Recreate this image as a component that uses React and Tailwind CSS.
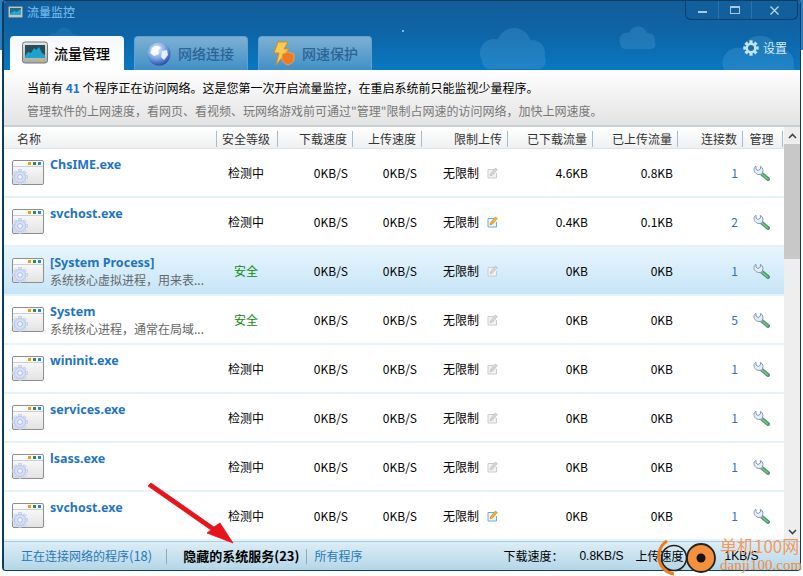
const CJK = '"Noto Sans CJK SC","Liberation Sans",sans-serif';

const rows = [
  { name: 'ChsIME.exe', level: '检测中', dl: '4.6KB', ul: '0.8KB', n: 1 },
  { name: 'svchost.exe', level: '检测中', dl: '0.4KB', ul: '0.1KB', n: 2, pen: true },
  { name: '[System Process]', sub: '系统核心虚拟进程，用来表...', level: '安全', dl: '0KB', ul: '0KB', n: 1, sel: true },
  { name: 'System', sub: '系统核心进程，通常在局域...', level: '安全', dl: '0KB', ul: '0KB', n: 5 },
  { name: 'wininit.exe', level: '检测中', dl: '0KB', ul: '0KB', n: 1 },
  { name: 'services.exe', level: '检测中', dl: '0KB', ul: '0KB', n: 1 },
  { name: 'lsass.exe', level: '检测中', dl: '0KB', ul: '0KB', n: 1 },
  { name: 'svchost.exe', level: '检测中', dl: '0KB', ul: '0KB', n: 1, pen: true },
];

function Cloud({ x, y, s = 1, o = 0.22 }) {
  return (
    <g transform={`translate(${x} ${y}) scale(${s})`} fill="#6db4e4" opacity={o}>
      <circle cx="20" cy="22" r="14" />
      <circle cx="40" cy="14" r="17" />
      <circle cx="58" cy="22" r="13" />
      <rect x="8" y="22" width="64" height="16" rx="8" />
    </g>
  );
}

function MonitorIcon() {
  return (
    <svg width="26" height="24" viewBox="0 0 26 24" className="shrink-0">
      <defs>
        <linearGradient id="mon" x1="0" y1="0" x2="0" y2="1">
          <stop offset="0" stopColor="#e8e8e6" />
          <stop offset="1" stopColor="#a9a9a4" />
        </linearGradient>
      </defs>
      <rect x="0.5" y="1" width="25" height="21" rx="2.5" fill="url(#mon)" stroke="#77777a" />
      <rect x="3" y="4" width="20" height="13" fill="#274c5c" />
      <path d="M3 15 L6 11 L9 12 L12 7 L14 9 L17 6 L20 12 L23 14 V17 H3 Z" fill="#1fa3cc" />
      <rect x="17" y="18.5" width="3" height="2" fill="#f0b020" />
    </svg>
  );
}

function GlobeIcon() {
  return (
    <svg width="24" height="24" viewBox="0 0 24 24" className="shrink-0">
      <defs>
        <radialGradient id="glb" cx="0.4" cy="0.3" r="0.8">
          <stop offset="0" stopColor="#eef4fc" />
          <stop offset="0.5" stopColor="#7aa6e2" />
          <stop offset="1" stopColor="#12349a" />
        </radialGradient>
      </defs>
      <circle cx="12" cy="12" r="11.5" fill="url(#glb)" />
      <path d="M5 6 C8 3 12 3 14 6 L11 8 L12 12 L7 14 L3 11 Z" fill="#ffffff" opacity="0.9" />
      <path d="M15 9 L20 8 L21 13 L17 18 L14 15 Z" fill="#f2f6fc" opacity="0.9" />
    </svg>
  );
}

function BoltIcon() {
  return (
    <svg width="24" height="25" viewBox="0 0 24 25" className="shrink-0">
      <path d="M7 1 H17 L13 8 H18 L5 24 L8 12 H3 Z" fill="#f8cc50" stroke="#e08818" strokeWidth="1" />
      <path d="M11 13 L17 11 L23 13 V18 C23 21 20 23 17 24 C14 23 11 21 11 18 Z" fill="#ee7a22" stroke="#f8b060" strokeWidth="0.7" />
    </svg>
  );
}

function GearIcon() {
  const teeth = [0, 45, 90, 135, 180, 225, 270, 315];
  return (
    <svg width="16" height="16" viewBox="0 0 16 16" className="shrink-0">
      {teeth.map((a) => (
        <rect key={a} x="6.4" y="0.3" width="3.2" height="3.6" fill="#bfe6ee" transform={`rotate(${a} 8 8)`} />
      ))}
      <circle cx="8" cy="8" r="5.2" fill="#bfe6ee" />
      <circle cx="8" cy="8" r="3" fill="#1d6f9b" />
    </svg>
  );
}

function AppIcon() {
  const teeth = [0, 45, 90, 135, 180, 225, 270, 315];
  return (
    <svg width="33" height="26" viewBox="0 0 33 26" className="shrink-0">
      <defs>
        <linearGradient id="app" x1="0" y1="0" x2="0" y2="1">
          <stop offset="0" stopColor="#ffffff" />
          <stop offset="1" stopColor="#e2e2e2" />
        </linearGradient>
      </defs>
      <rect x="0.5" y="0.5" width="31" height="24" rx="1.5" fill="url(#app)" stroke="#8d8d8d" />
      <path d="M1 6.5 H31" stroke="#c8d0dc" />
      <rect x="16" y="2" width="3" height="3" fill="#ee9a18" />
      <rect x="21" y="2" width="3" height="3" fill="#2e8c4c" />
      <rect x="26" y="2" width="3" height="3" fill="#1d8fc0" />
      {teeth.map((a) => (
        <rect key={a} x="6.6" y="9.5" width="2.8" height="3" fill="#d6e0f6" stroke="#aebde6" strokeWidth="0.5" transform={`rotate(${a} 8 17)`} />
      ))}
      <circle cx="8" cy="17" r="5.5" fill="#d6e0f6" stroke="#aebde6" strokeWidth="0.7" />
      <circle cx="8" cy="17" r="2.4" fill="#f4f6fb" stroke="#9fb0dc" strokeWidth="0.8" />
    </svg>
  );
}

function Wrench() {
  return (
    <svg width="17" height="16" viewBox="0 0 17 16" className="shrink-0">
      <path d="M9 9 L15 14" stroke="#4f9e6a" strokeWidth="4" strokeLinecap="round" />
      <path d="M9.5 9.5 L14.5 13.7" stroke="#7cc58f" strokeWidth="1.2" strokeLinecap="round" />
      <path d="M3 1.2 L3 4 L5 5.6 L7.4 4 L7.4 1.4 C10 2.6 10.4 5.4 9.6 7 L9 9.2 L7 9.4 C4 10 0.8 7.6 1 4.2 C1 3 1.8 1.8 3 1.2 Z" fill="#e7edf4" stroke="#8199b4" strokeWidth="1" />
    </svg>
  );
}

function Pencil({ on }) {
  return (
    <svg width="11" height="12" viewBox="0 0 11 12" className="shrink-0">
      <path d="M7 2.5 H1 V11 H9.5 V6" fill={on ? '#eaf4fc' : '#f2f2f2'} stroke={on ? '#6aaede' : '#cccccc'} />
      <path d="M3 8.8 L3.6 6.6 L8.4 1 L10.4 2.6 L5.4 8.2 Z" fill={on ? '#f2b42a' : '#d6d6d6'} stroke={on ? '#c4701a' : '#b0b0b0'} strokeWidth="0.5" />
    </svg>
  );
}

function Tab({ active, icon, label }) {
  return (
    <div
      className={
        active
          ? 'h-[34px] w-[114px] rounded-t-[4px] bg-gradient-to-b from-[#f4f7f9] to-white flex items-center pl-[12px] gap-[6px]'
          : 'h-[34px] w-[114px] rounded-t-[4px] border border-b-0 border-[#5ea2d2] bg-gradient-to-b from-[#7db0d2] to-[#3f90c8] flex items-center pl-[12px] gap-[7px]'
      }
    >
      {icon}
      <span className={active ? 'text-[14px] font-medium text-black' : 'text-[14px] font-medium text-[#2a6595]'}>{label}</span>
    </div>
  );
}

const gridCols = 'grid grid-cols-[213px_61px_75px_69px_86px_85px_85px_65px_40px]';

function Head({ label, align = 'right' }) {
  return (
    <div
      className={
        align === 'center'
          ? 'h-[16px] flex items-center justify-center pr-[2px] border-r border-[#a9bccb]'
          : 'h-[16px] flex items-center justify-end pr-[5px] border-r border-[#a9bccb]'
      }
    >
      {label}
    </div>
  );
}

function Row({ r }) {
  return (
    <div
      className={
        'h-[49px] border-b-2 ' +
        (r.sel
          ? 'bg-gradient-to-b from-[#e8f5fd] to-[#c6e5f8] border-[#e6f2f9]'
          : 'bg-white border-[#e6f2f9]')
      }
    >
      <div className={gridCols + ' h-full items-center text-[12px] text-black'}>
        <div className="flex h-full pl-[8px] pt-[11px] min-w-0">
          <AppIcon />
          <div className="ml-[5px] -mt-[3px] min-w-0">
            <div
              className="text-[12.5px] font-bold text-[#1f74c4] leading-[16px] whitespace-nowrap"
              style={{ fontFamily: '"Noto Sans",sans-serif' }}
            >
              {r.name}
            </div>
            {r.sub && <div className="text-[12px] text-[#666] leading-[18px] whitespace-nowrap">{r.sub}</div>}
          </div>
        </div>
        <div className={r.level === '安全' ? 'text-center pr-[3px] text-[#0a8a0a]' : 'text-center pr-[3px]'}>{r.level}</div>
        <div className="text-right pr-[5px]">0KB/S</div>
        <div className="text-right pr-[5px]">0KB/S</div>
        <div className="flex items-center pl-[21px] gap-[8px]">
          <span>无限制</span>
          <Pencil on={r.pen} />
        </div>
        <div className="text-right pr-[5px]">{r.dl}</div>
        <div className="text-right pr-[5px]">{r.ul}</div>
        <div className="text-right pr-[5px] text-[#2a6fc4]">{r.n}</div>
        <div className="flex justify-center pr-[3px]">
          <Wrench />
        </div>
      </div>
    </div>
  );
}

export default function App() {
  return (
    <div
      className="relative w-[803px] h-[576px] overflow-hidden bg-[linear-gradient(to_bottom,#2a7fc0_50px,#ffffff_50px)] pl-[2px]"
      style={{ fontFamily: CJK }}
    >
      <div className="w-[799px] h-[571px] rounded-[4px] border border-[#0c3c5e] border-l-2 flex flex-col overflow-hidden bg-white">
        {/* Top banner */}
        <div className="relative h-[69px] shrink-0 bg-gradient-to-b from-[#135c99] via-[#0d66a8] to-[#0878c2] flex flex-col">
          <svg width="796" height="69" className="absolute inset-0" viewBox="0 0 796 69">
            <Cloud x="470" y="30" s="1" />
            <Cloud x="612" y="27" s="0.55" />
            <Cloud x="712" y="38" s="1.1" />
            <Cloud x="40" y="28" s="0.5" o="0.12" />
            <circle cx="399" cy="30" r="1" fill="#9fd8f4" />
          </svg>
          <div className="relative flex items-start justify-between h-[35px]">
            <div className="flex items-center h-[22px] pl-[4px] gap-[4px]">
              <svg width="15" height="12" viewBox="0 0 15 12">
                <rect x="0.5" y="0.5" width="14" height="11" rx="1" fill="#b9c6cc" stroke="#6f8696" />
                <rect x="2" y="2" width="11" height="7" fill="#1e6f8a" />
                <path d="M2 8 L6 5 L9 6 L13 3 V9 H2 Z" fill="#2fa7c8" />
              </svg>
              <span className="text-[12px] font-medium text-[#6bb4e6]">流量监控</span>
            </div>
            <div className="w-[113px] h-[19px] mr-[2px] rounded-b-[6px] border border-t-0 border-[#0b3f68] bg-[#125f9e] flex text-[#c6dcee]">
              <div className="w-[33px] flex items-center justify-center border-r border-[#2a72ac]">
                <div className="w-[9px] h-[2px] bg-[#a8cbe4] mt-[4px]" />
              </div>
              <div className="w-[33px] flex items-center justify-center border-r border-[#2a72ac]">
                <div className="w-[10px] h-[8px] border border-t-2 border-[#a8cbe4]" />
              </div>
              <div className="flex-1 flex items-center justify-center">
                <svg width="9" height="9" viewBox="0 0 9 9">
                  <path d="M0.5 0.5 L8.5 8.5 M8.5 0.5 L0.5 8.5" stroke="#bcd8ec" strokeWidth="1.2" />
                </svg>
              </div>
            </div>
          </div>
          <div className="relative flex items-end justify-between pl-[6px]">
            <div className="flex gap-[10px]">
              <Tab active icon={<MonitorIcon />} label="流量管理" />
              <Tab icon={<GlobeIcon />} label="网络连接" />
              <Tab icon={<BoltIcon />} label="网速保护" />
            </div>
            <div className="flex items-center gap-[4px] mr-[13px] mb-[13px] text-[12px] text-[#d5ecf8]">
              <GearIcon />
              <span>设置</span>
            </div>
          </div>
        </div>

        {/* Info */}
        <div className="h-[57px] shrink-0 bg-gradient-to-b from-white to-[#e3e3e3] pl-[23px] pt-[9px] border-b-2 border-[#c9d0d4] text-[12px]">
          <div className="leading-[18px] text-black whitespace-nowrap">
            当前有 <span className="font-bold text-[#1f74c4]">41</span> 个程序正在访问网络。这是您第一次开启流量监控，在重启系统前只能监视少量程序。
          </div>
          <div className="leading-[18px] mt-[5px] text-[#777] whitespace-nowrap">
            管理软件的上网速度，看网页、看视频、玩网络游戏前可通过"管理"限制占网速的访问网络，加快上网速度。
          </div>
        </div>

        {/* Table + scrollbar */}
        <div className="flex-1 flex min-h-0">
          <div className="w-[781px] flex flex-col min-w-0">
            <div className={gridCols + ' h-[22px] pt-[2px] shrink-0 items-center bg-gradient-to-b from-white to-[#eef0f1] border-b border-[#dfe3e6] text-[12px] text-[#333]'}>
              <div className="pl-[13px] border-r border-[#a9bccb] h-[16px] flex items-center">名称</div>
              <Head label="安全等级" align="center" />
              <Head label="下载速度" />
              <Head label="上传速度" />
              <Head label="限制上传" />
              <Head label="已下载流量" />
              <Head label="已上传流量" />
              <Head label="连接数" />
              <Head label="管理" align="center" />
            </div>
            <div className="flex-1 overflow-hidden">
              {rows.map((r, i) => (
                <Row key={i} r={r} />
              ))}
            </div>
          </div>
          <div className="w-[16px] bg-[#eeeeee] flex flex-col items-center">
            <div className="h-[17px] flex items-center justify-center">
              <svg width="9" height="6" viewBox="0 0 9 6">
                <path d="M1 5 L4.5 1.5 L8 5" fill="none" stroke="#444" strokeWidth="1.6" />
              </svg>
            </div>
            <div className="w-full h-[115px] bg-[#c8c8c8]" />
            <div className="flex-1" />
            <div className="h-[17px] mb-[1px] flex items-center justify-center">
              <svg width="9" height="6" viewBox="0 0 9 6">
                <path d="M1 1 L4.5 4.5 L8 1" fill="none" stroke="#444" strokeWidth="1.6" />
              </svg>
            </div>
          </div>
        </div>

        {/* Footer */}
        <div className="h-[29px] shrink-0 border-t border-[#a8cfe0] bg-gradient-to-b from-[#dcedf6] to-[#b4d6e7] flex items-center text-[12px]">
          <span className="ml-[17px] text-[#2878b8] whitespace-nowrap">正在连接网络的程序<span className="text-[13px]">(18)</span></span>
          <div className="ml-[14px] w-px h-[15px] bg-[#8fa9b8]" />
          <span className="ml-[16px] text-[13px] font-bold text-black whitespace-nowrap">隐藏的系统服务(23)</span>
          <div className="ml-[7px] w-px h-[15px] bg-[#8fa9b8]" />
          <span className="ml-[7px] text-[#2878b8]">所有程序</span>
          <span className="ml-[141px] text-black">下载速度：</span>
          <span className="ml-[16px] text-black" style={{ fontFamily: '"Liberation Sans",sans-serif' }}>0.8KB/S</span>
          <span className="ml-[12px] text-black">上传速度</span>
          <span className="ml-[41px] text-black" style={{ fontFamily: '"Liberation Sans",sans-serif' }}>1KB/S</span>
        </div>
      </div>

      {/* Red arrow annotation */}
      <svg className="absolute left-[145px] top-[480px]" width="95" height="70" viewBox="0 0 95 70">
        <path d="M3 6 L6 3 L69 47 L75 43 L88 63 L62 53 L66 50 Z" fill="#e8141c" stroke="#e8141c" strokeWidth="0.8" strokeLinejoin="round" />
      </svg>

      {/* Watermark */}
      <div className="absolute left-[655px] top-[536px] w-[148px] h-[40px]">
        <svg className="absolute left-0 top-0" width="72" height="40" viewBox="0 0 72 40">
          <path d="M12 5 A18 18 0 0 0 19 38" fill="none" stroke="#f07a20" strokeWidth="3" />
          <circle cx="19" cy="22" r="12.5" fill="none" stroke="#222" strokeWidth="1.6" />
          <circle cx="46" cy="22" r="14" fill="#f5913c" stroke="#222" strokeWidth="1.8" />
          <circle cx="46" cy="22" r="4.5" fill="#141414" />
        </svg>
        <div className="absolute left-[65px] top-[0px] text-[17px] leading-[20px] text-[#f49a5e] whitespace-nowrap">单机100网</div>
        <div className="absolute left-[65px] top-[21px] text-[15px] leading-[16px] text-[#f08a40] whitespace-nowrap" style={{ fontFamily: '"Liberation Serif",serif' }}>danji100.com</div>
      </div>
    </div>
  );
}
